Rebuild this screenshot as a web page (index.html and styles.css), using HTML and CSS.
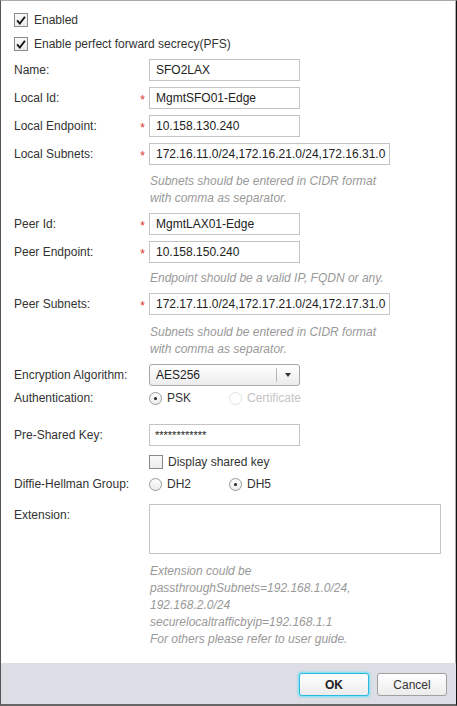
FILE: index.html
```html
<!DOCTYPE html>
<html>
<head>
<meta charset="utf-8">
<link rel="stylesheet" href="styles.css">
</head>
<body>
<div class="dialog">
  <div class="form">
    <label class="check-row first">
      <span class="cbox checked"><svg viewBox="0 0 13 13" width="13" height="13"><path d="M2.3 6.4 L5.2 9.8 L10.8 2.4" fill="none" stroke="#111" stroke-width="2"/></svg></span>
      <span>Enabled</span>
    </label>
    <label class="check-row">
      <span class="cbox checked"><svg viewBox="0 0 13 13" width="13" height="13"><path d="M2.3 6.4 L5.2 9.8 L10.8 2.4" fill="none" stroke="#111" stroke-width="2"/></svg></span>
      <span>Enable perfect forward secrecy(PFS)</span>
    </label>

    <div class="field first-field">
      <span class="label">Name:</span><span class="star"></span>
      <span class="input w150">SFO2LAX</span>
    </div>
    <div class="field">
      <span class="label">Local Id:</span><span class="star">*</span>
      <span class="input w150">MgmtSFO01-Edge</span>
    </div>
    <div class="field">
      <span class="label">Local Endpoint:</span><span class="star">*</span>
      <span class="input w150">10.158.130.240</span>
    </div>
    <div class="field">
      <span class="label">Local Subnets:</span><span class="star">*</span>
      <span class="input w240">172.16.11.0/24,172.16.21.0/24,172.16.31.0</span>
    </div>
    <div class="hint">Subnets should be entered in CIDR format<br>with comma as separator.</div>

    <div class="field">
      <span class="label">Peer Id:</span><span class="star">*</span>
      <span class="input w150">MgmtLAX01-Edge</span>
    </div>
    <div class="field">
      <span class="label">Peer Endpoint:</span><span class="star">*</span>
      <span class="input w150">10.158.150.240</span>
    </div>
    <div class="hint hint-one">Endpoint should be a valid IP, FQDN or any.</div>
    <div class="field">
      <span class="label">Peer Subnets:</span><span class="star">*</span>
      <span class="input w240">172.17.11.0/24,172.17.21.0/24,172.17.31.0</span>
    </div>
    <div class="hint hint-peer">Subnets should be entered in CIDR format<br>with comma as separator.</div>

    <div class="field">
      <span class="label">Encryption Algorithm:</span><span class="star"></span>
      <span class="select"><span class="select-value">AES256</span><span class="select-btn"><span class="tri"></span></span></span>
    </div>
    <div class="radio-field auth">
      <span class="label">Authentication:</span><span class="star"></span>
      <span class="radios">
        <span class="radio-item"><span class="radio on"></span>PSK</span>
        <span class="radio-item disabled"><span class="radio"></span>Certificate</span>
      </span>
    </div>
    <div class="field psk">
      <span class="label">Pre-Shared Key:</span><span class="star"></span>
      <span class="input w150 pw">************</span>
    </div>
    <div class="radio-field display-key">
      <span class="label"></span><span class="star"></span>
      <span class="radio-item"><span class="cbox"></span>Display shared key</span>
    </div>
    <div class="radio-field dh">
      <span class="label">Diffie-Hellman Group:</span><span class="star"></span>
      <span class="radios">
        <span class="radio-item"><span class="radio"></span>DH2</span>
        <span class="radio-item"><span class="radio on"></span>DH5</span>
      </span>
    </div>
    <div class="field ext">
      <span class="label">Extension:</span><span class="star"></span>
      <span class="textarea"></span>
    </div>
    <div class="hint hint-ext">Extension could be<br>passthroughSubnets=192.168.1.0/24,<br>192.168.2.0/24<br>securelocaltrafficbyip=192.168.1.1<br>For others please refer to user guide.</div>
  </div>
  <div class="footer">
    <button class="btn ok">OK</button>
    <button class="btn">Cancel</button>
  </div>
</div>
</body>
</html>
```

FILE: styles.css
```css
html, body {
  margin: 0;
  padding: 0;
  background: #fff;
}
body {
  font-family: "Liberation Sans", Arial, sans-serif;
  font-size: 12px;
  color: #333;
}
.dialog {
  width: 457px;
  height: 706px;
  box-sizing: border-box;
  border-top: 1px solid #a8a8a8;
  border-left: 1px solid #555;
  border-right: 1px solid #111;
  border-bottom: 2px solid #666;
  box-shadow: inset -1px 0 0 #b0b0b0;
  display: flex;
  flex-direction: column;
}
.form {
  flex: 1;
  padding: 0 0 0 13px;
}
.check-row {
  display: flex;
  align-items: center;
  height: 20px;
  margin-top: 4px;
}
.check-row.first {
  margin-top: 9px;
}
.cbox {
  width: 12px;
  height: 12px;
  border: 1px solid #8a8a8a;
  background: linear-gradient(#fafafa, #ececec);
  margin-right: 6px;
  display: inline-flex;
  align-items: center;
  justify-content: center;
  flex: none;
}
.cbox svg {
  display: block;
}
.field {
  display: flex;
  align-items: center;
  height: 22px;
  margin-top: 6px;
}
.field.first-field {
  margin-top: 5px;
}
.label {
  width: 122px;
  flex: none;
}
.star {
  width: 13px;
  flex: none;
  color: #e0302a;
  font-size: 12px;
  text-align: center;
  position: relative;
  top: 2px;
}
.input {
  box-sizing: border-box;
  height: 22px;
  border: 1px solid #c4c4c4;
  padding: 0 6px;
  line-height: 20px;
  color: #222;
  white-space: nowrap;
  overflow: hidden;
  font-size: 12px;
}
.w150 { width: 151px; }
.w240 { width: 241px; }
.pw {
  font-size: 11px;
  padding-left: 5px;
}
.hint {
  margin-left: 136px;
  font-style: italic;
  color: #999;
  line-height: 17px;
  margin-top: 8px;
  margin-bottom: 2px;
}
.hint-one {
  margin-top: 7px;
  margin-bottom: 2px;
}
.hint-peer {
  margin-top: 9px;
  margin-bottom: 2px;
}
.select {
  box-sizing: border-box;
  width: 151px;
  height: 22px;
  border: 1px solid #a6a6a6;
  border-radius: 3px;
  background: linear-gradient(#ffffff, #ececec);
  display: flex;
  align-items: stretch;
}
.select-value {
  flex: 1;
  padding-left: 6px;
  line-height: 20px;
  color: #222;
}
.select-btn {
  width: 22px;
  border-left: 1px solid #b8b8b8;
  margin: 3px 0;
  display: flex;
  align-items: center;
  justify-content: center;
}
.tri {
  width: 0;
  height: 0;
  border-left: 3px solid transparent;
  border-right: 3px solid transparent;
  border-top: 4px solid #333;
}
.radio-field {
  display: flex;
  align-items: center;
  height: 18px;
  margin-top: 3px;
}
.radio-field.auth {
  margin-top: 3px;
}
.radio-field.dh {
  margin-top: 4px;
}
.radios {
  display: flex;
}
.radio-item {
  display: flex;
  align-items: center;
  width: 80px;
}
.radio-item.disabled {
  color: #c4c4c4;
}
.radio {
  box-sizing: border-box;
  width: 13px;
  height: 13px;
  border: 1px solid #999;
  border-radius: 50%;
  background: linear-gradient(#fdfdfd, #ececec);
  margin-right: 5px;
  display: inline-flex;
  align-items: center;
  justify-content: center;
  flex: none;
}
.disabled .radio {
  border-color: #e2e2e2;
  background: #fff;
}
.radio.on::after {
  content: "";
  width: 3px;
  height: 3px;
  border-radius: 50%;
  background: #222;
}
.psk {
  margin-top: 17px;
}
.display-key {
  margin-top: 7px;
}
.display-key .cbox {
  margin-right: 5px;
}
.display-key .radio-item {
  width: auto;
}
.ext {
  align-items: flex-start;
  height: 50px;
  margin-top: 11px;
}
.ext .label {
  padding-top: 4px;
}
.textarea {
  box-sizing: border-box;
  width: 292px;
  height: 50px;
  border: 1px solid #c4c4c4;
}
.hint-ext {
  margin-top: 9px;
}
.footer {
  height: 41px;
  background: #dddde5;
  display: flex;
  justify-content: flex-end;
  align-items: flex-start;
  padding: 10px 9px 0 0;
  box-sizing: border-box;
  gap: 8px;
}
.btn {
  font-family: "Liberation Sans", Arial, sans-serif;
  font-size: 12px;
  width: 70px;
  height: 23px;
  border: 1px solid #a0a0a0;
  border-radius: 3px;
  background: linear-gradient(#ffffff, #ececec);
  color: #333;
  padding: 0;
}
.btn.ok {
  font-weight: bold;
  border: 1px solid #2ab8dc;
  box-shadow: 0 0 0 1px #8fe3f5, 0 0 2px 1px #6fd6ee;
  color: #222;
}
```
